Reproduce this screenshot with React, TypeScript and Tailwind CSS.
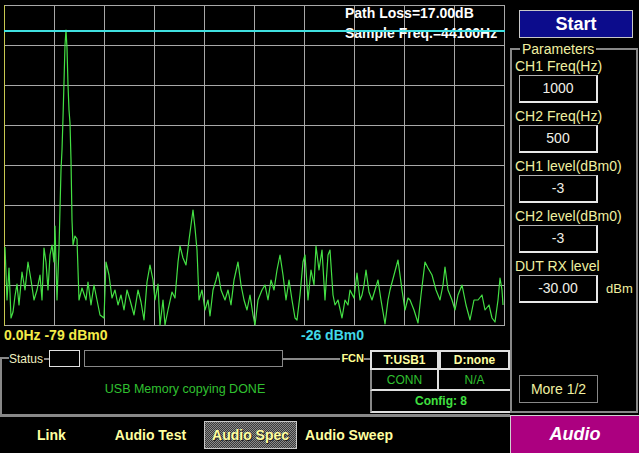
import React from 'react'

// spectrum trace, screen coords inside the 510x326 plot
const trace: [number, number][] = [
  [5, 247], [7, 300], [9, 268], [11, 318], [13, 312], [15, 296], [17, 284], [19, 305], [22, 272], [25, 290],
  [28, 262], [31, 280], [34, 300], [37, 290], [40, 275], [42, 300], [44, 248], [46, 262], [48, 290], [50, 255],
  [52, 245], [54, 262], [55, 226], [57, 300], [59, 248], [61, 170], [62, 150], [63, 118], [64, 82], [65, 45],
  [66, 30], [67, 48], [68, 85], [69, 110], [70, 123], [71, 160], [72, 220], [73, 245], [75, 236], [77, 239],
  [79, 300], [82, 288], [86, 300], [88, 282], [91, 305], [94, 285], [97, 300], [100, 315], [104, 318], [106, 262],
  [109, 275], [112, 298], [115, 290], [118, 305], [121, 295], [124, 310], [127, 290], [130, 300], [134, 315], [138, 290],
  [141, 302], [144, 320], [147, 282], [150, 265], [153, 280], [155, 300], [158, 284], [160, 325], [163, 300], [165, 325],
  [168, 310], [172, 292], [175, 298], [178, 262], [180, 246], [183, 258], [186, 265], [189, 240], [191, 225], [193, 210],
  [195, 228], [197, 250], [199, 300], [202, 290], [205, 310], [208, 300], [210, 316], [213, 290], [216, 280], [218, 272],
  [221, 290], [225, 300], [228, 290], [231, 305], [234, 280], [238, 262], [241, 285], [244, 300], [247, 310], [250, 295],
  [253, 315], [255, 325], [258, 300], [262, 290], [265, 285], [268, 300], [271, 280], [274, 290], [277, 270], [280, 255],
  [283, 275], [286, 300], [289, 280], [292, 300], [295, 318], [297, 320], [300, 295], [303, 262], [305, 255], [308, 300],
  [311, 270], [314, 285], [316, 246], [319, 270], [322, 250], [325, 300], [328, 255], [330, 250], [333, 295], [335, 305],
  [338, 300], [342, 318], [345, 300], [348, 305], [350, 290], [354, 298], [357, 273], [360, 300], [362, 295], [364, 285],
  [366, 270], [369, 292], [372, 300], [375, 290], [378, 280], [381, 300], [385, 324], [388, 300], [390, 290], [394, 275],
  [398, 260], [402, 290], [405, 310], [408, 298], [410, 300], [414, 310], [418, 323], [421, 295], [425, 262], [428, 268],
  [432, 275], [436, 290], [440, 300], [443, 285], [445, 267], [448, 290], [452, 300], [455, 310], [458, 295], [462, 285],
  [466, 305], [470, 320], [474, 300], [478, 300], [482, 295], [485, 310], [489, 305], [492, 318], [495, 322], [498, 300],
  [500, 278], [502, 290], [503, 305],
]

const vLines = [54, 104, 154, 204, 254, 304, 354, 404, 454, 504]
const hLines = [5, 45, 85, 125, 165, 205, 245, 285, 325]

const params = [
  { label: 'CH1 Freq(Hz)', value: '1000' },
  { label: 'CH2 Freq(Hz)', value: '500' },
  { label: 'CH1 level(dBm0)', value: '-3' },
  { label: 'CH2 level(dBm0)', value: '-3' },
  { label: 'DUT RX level', value: '-30.00', unit: 'dBm' },
]

function Plot() {
  return (
    <div className="relative h-[326px] w-[510px]">
      <svg width={510} height={326} className="block">
        {hLines.map((y) => (
          <line key={y} x1={4} x2={505} y1={y + 0.5} y2={y + 0.5} stroke="#a8a8a8" />
        ))}
        {vLines.map((x) => (
          <line key={x} x1={x + 0.5} x2={x + 0.5} y1={5} y2={326} stroke="#a8a8a8" />
        ))}
        <line x1={4.5} x2={4.5} y1={5} y2={326} stroke="#c8c850" />
        <polyline
          points={trace.map(([x, y]) => `${x},${y}`).join(' ')}
          fill="none"
          stroke="#44e044"
          strokeWidth={1.2}
          strokeLinejoin="round"
        />
      </svg>
      <div className="absolute left-[345px] top-[3px] text-[14px] font-bold leading-[20px] text-white">
        <div>Path Loss=17.00dB</div>
        <div>Sample Freq.=44100Hz</div>
      </div>
      {/* reference level marker */}
      <div className="absolute left-[4px] top-[30px] h-[2px] w-[501px] bg-[#40e0e0]" />
    </div>
  )
}

function StatusArea() {
  return (
    <div className="flex h-[65px]">
      <div className="flex w-[370px] flex-col">
        <div className="flex h-[19px] items-center">
          <div className="w-[9px] self-stretch pt-[8px]">
            <div className="h-full border-l-2 border-t-2 border-[#888]" />
          </div>
          <span className="text-[12px] leading-none text-[#f0f0c0]">Status</span>
          <div className="ml-[1px] h-[2px] w-[5px] bg-[#888]" />
          <div className="h-[17px] w-[31px] border border-[#e0e0e0]" />
          <div className="w-[4px]" />
          <div className="h-[17px] w-[199px] border border-[#888]" />
          <div className="h-[2px] flex-1 bg-[#888]" />
          <span className="ml-[1px] text-[11px] font-bold leading-none text-[#ffff90]">FCN</span>
          <div className="h-[2px] w-[6px] bg-[#888]" />
        </div>
        <div className="flex flex-1 items-center justify-center border-l-2 border-[#888] pb-[3px] pr-[2px]">
          <span className="text-[12.5px] text-[#30c030]">USB Memory copying DONE</span>
        </div>
      </div>
      <div className="flex w-[140px] flex-col pt-[1px] text-[12px]">
        <div className="flex h-[20px]">
          <div className="flex w-[69px] items-center justify-center border-2 border-[#e0e0e0] font-bold text-[#ffffa0]">T:USB1</div>
          <div className="flex w-[71px] items-center justify-center border-2 border-[#e0e0e0] font-bold text-[#ffffa0]">D:none</div>
        </div>
        <div className="flex h-[21px]">
          <div className="flex w-[69px] items-center justify-center border-b-2 border-l-2 border-r-2 border-b-[#e0e0e0] border-l-[#888] border-r-[#e0e0e0] text-[#30c030]">CONN</div>
          <div className="flex w-[71px] items-center justify-center border-b-2 border-[#e0e0e0] text-[#30c030]">N/A</div>
        </div>
        <div className="flex h-[22px] items-center justify-center border-b-2 border-l-2 border-b-[#e0e0e0] border-l-[#888] font-bold text-[#40e040]">
          Config: 8
        </div>
      </div>
    </div>
  )
}

function Tabs() {
  return (
    <div className="flex h-[36px] items-center text-[14px] font-bold text-[#ffffa0]">
      <span className="ml-[37px]">Link</span>
      <span className="ml-[49px]">Audio Test</span>
      <div className="ml-[18px] flex h-[28px] w-[93px] items-center justify-center border border-[#c8c8c8] bg-[#666] bg-[image:repeating-conic-gradient(#8a8a8a_0%_25%,#3a3a3a_0%_50%)] bg-size-[2px_2px] [text-shadow:1px_1px_0_#222]">
        Audio Spec
      </div>
      <span className="ml-[8px]">Audio Sweep</span>
    </div>
  )
}

function ParamsPanel() {
  return (
    <div className="flex w-[129px] flex-col">
      <button className="ml-[9px] mt-[10px] h-[28px] w-[114px] border border-[#c8c8c8] bg-[#0c0c8c] text-[18px] font-bold text-white">
        Start
      </button>
      <fieldset className="mt-[3px] w-[127px] border-2 border-[#888] px-[3px] pb-[8px]">
        <legend className="ml-[5px] px-[2px] text-[14px] leading-[16px] text-[#f0f0a0]">Parameters</legend>
        <div className="mt-[1px] flex flex-col gap-[5px]">
          {params.map((p) => (
            <div key={p.label}>
              <div className="mb-[1px] text-[14px] leading-[16px] text-[#f0f0a0]">{p.label}</div>
              <div className="flex items-center">
                <div className="ml-[4px] flex h-[28px] w-[79px] items-center justify-center border-b-2 border-l border-r-2 border-t border-b-[#e8e8e8] border-l-[#b0b0b0] border-r-[#e8e8e8] border-t-[#b0b0b0] text-[14px] text-[#f0f0e8]">
                  {p.value}
                </div>
                {p.unit && <span className="ml-[8px] text-[13px] text-[#f0f0a0]">{p.unit}</span>}
              </div>
            </div>
          ))}
        </div>
        <div className="ml-[4px] mt-[72px] flex h-[28px] w-[79px] items-center justify-center border border-[#888] text-[14px] text-[#f0f0a0]">
          More 1/2
        </div>
      </fieldset>
      <div className="mt-[2px] flex h-[38px] items-center justify-center border-l border-t border-[#d0d0d0] bg-[#ac0080] text-[18px] font-bold italic text-white">
        Audio
      </div>
    </div>
  )
}

export default function App() {
  return (
    <div className="flex h-[453px] w-[639px] overflow-hidden bg-black font-['Liberation_Sans',Arial,sans-serif]">
      <div className="flex w-[510px] flex-col">
        <Plot />
        <div className="flex h-[23px] pt-[1px] text-[14px] font-bold leading-[16px]">
          <span className="w-[301px] pl-[4px] text-[#f4ec48]">0.0Hz -79 dBm0</span>
          <span className="text-[#40d8e8]">-26 dBm0</span>
        </div>
        <StatusArea />
        <div className="h-[3px] bg-[#888]" />
        <Tabs />
      </div>
      <ParamsPanel />
    </div>
  )
}
